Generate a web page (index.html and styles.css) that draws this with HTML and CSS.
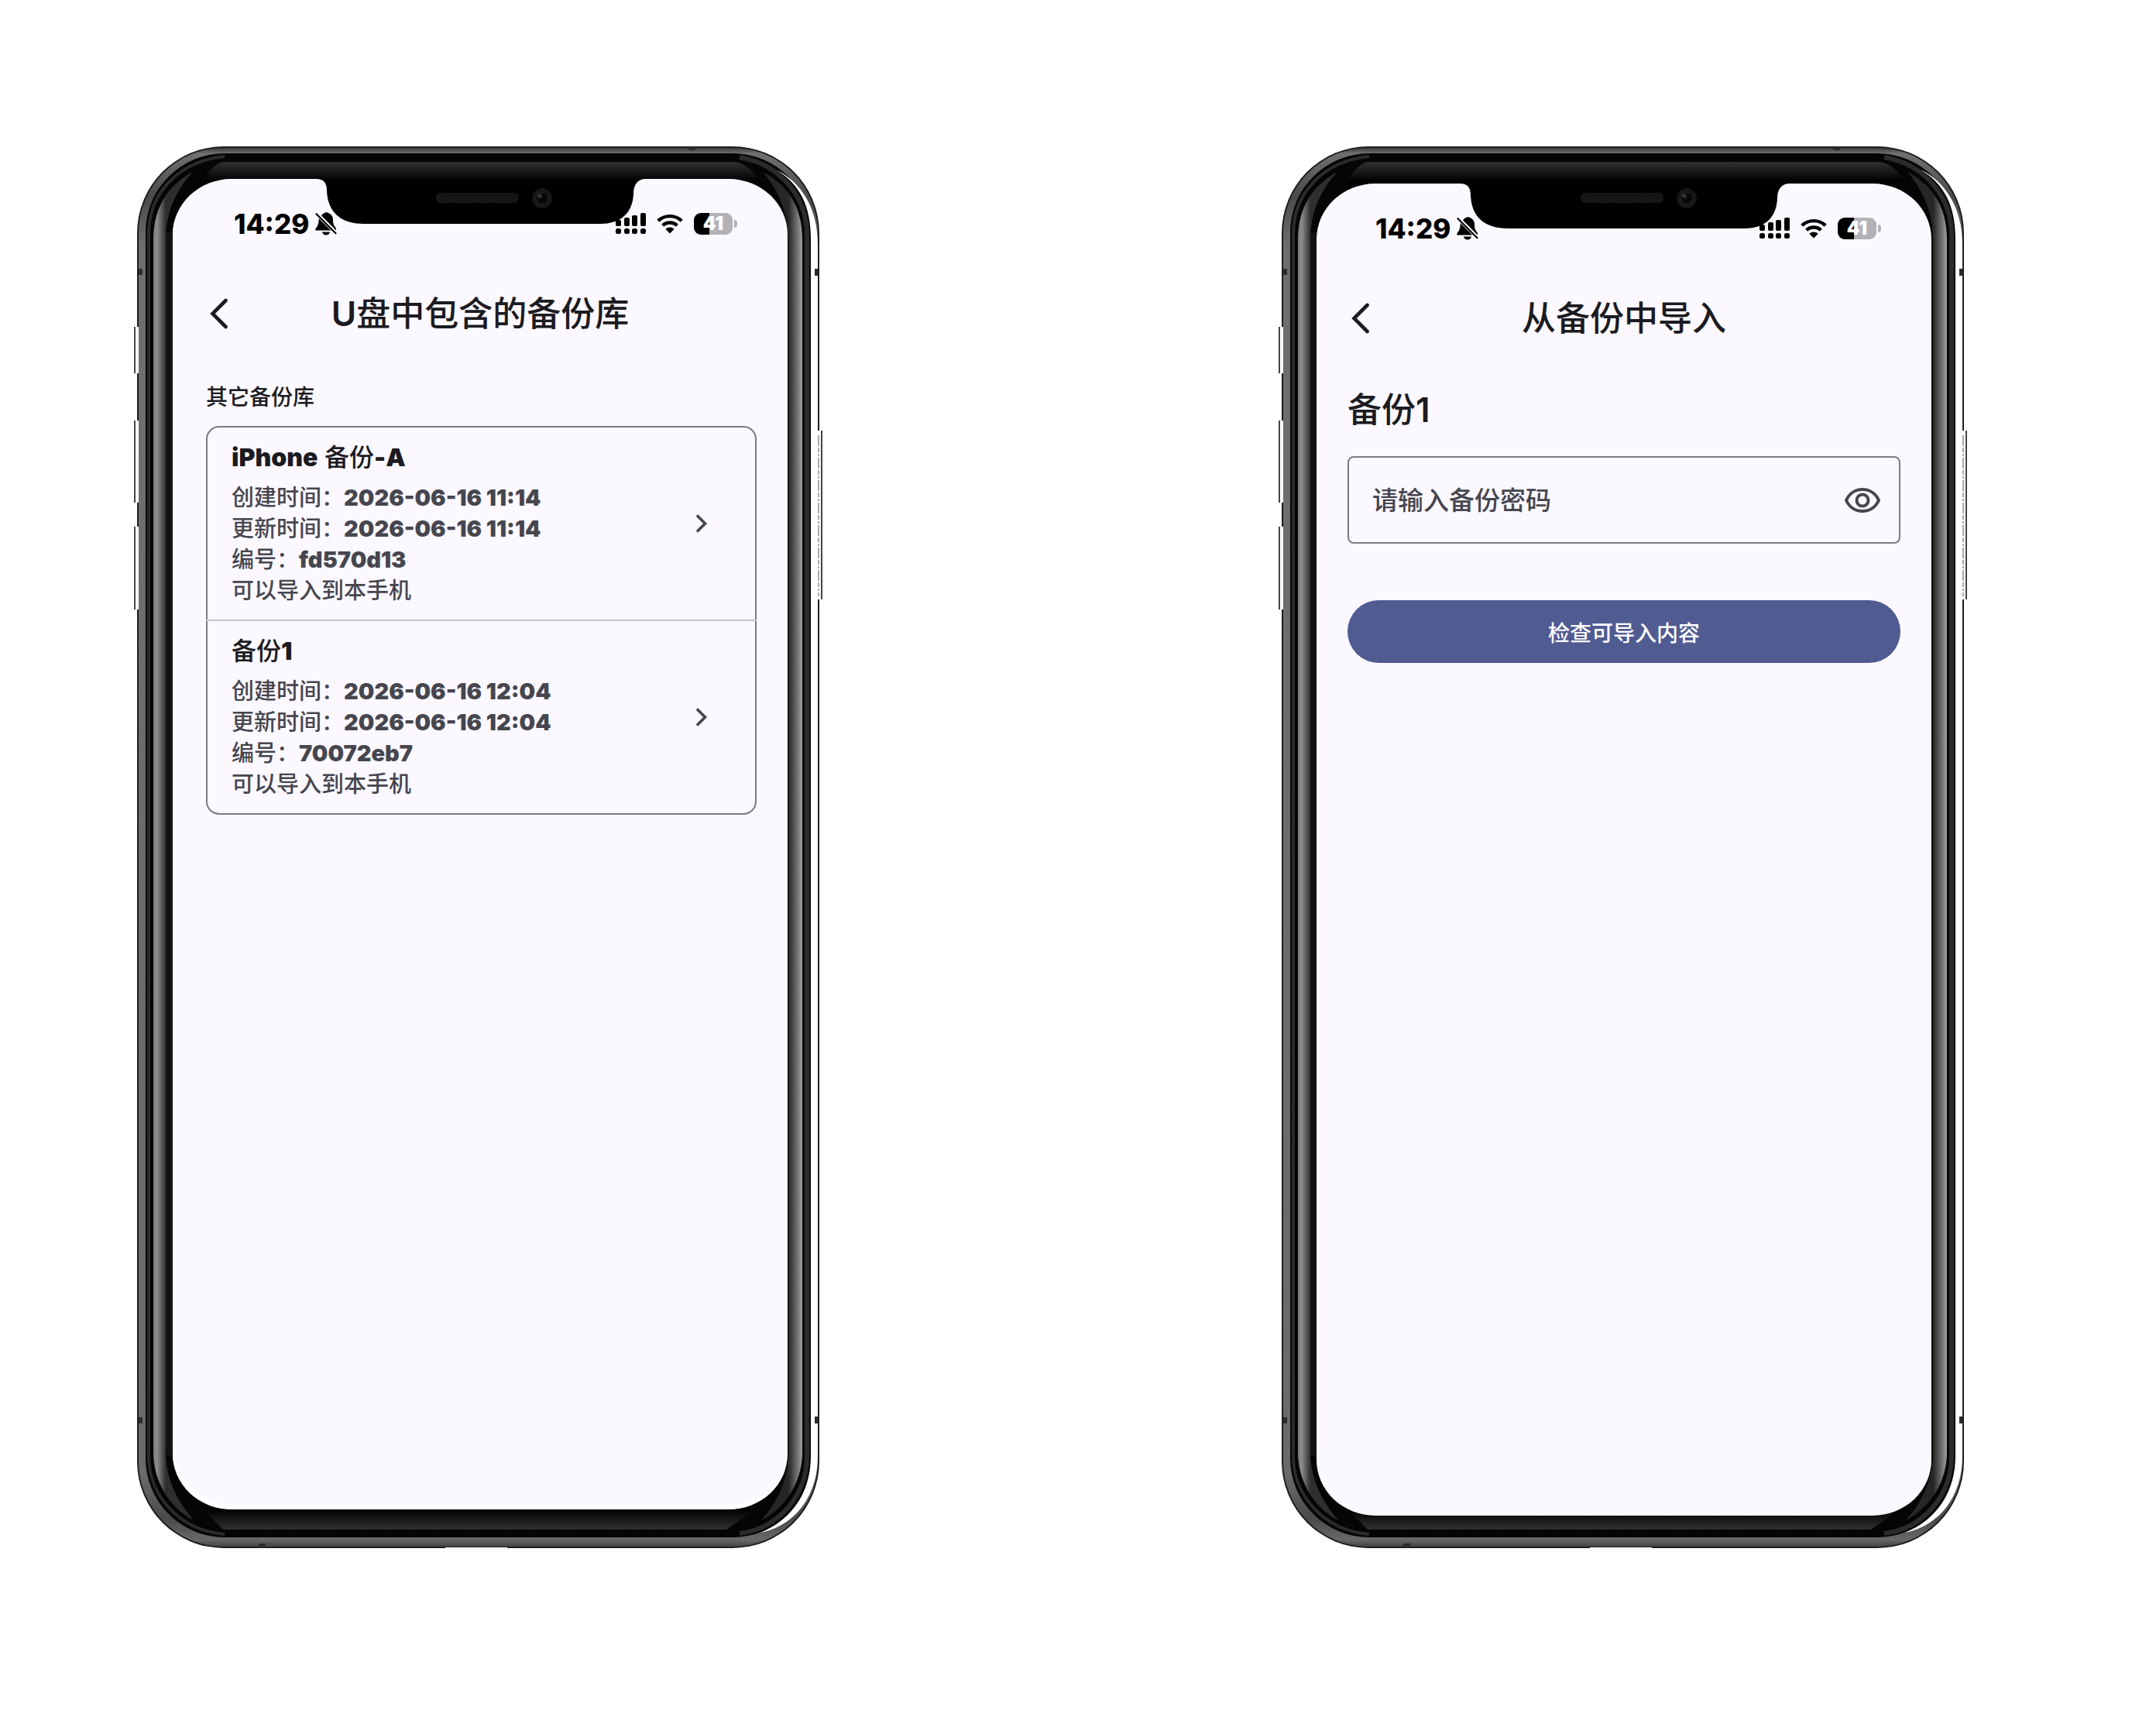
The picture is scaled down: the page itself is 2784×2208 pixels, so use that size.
FILE: index.html
```html
<!DOCTYPE html>
<html lang="zh-CN">
<head>
<meta charset="utf-8">
<meta name="viewport" content="width=device-width, initial-scale=1">
<title>从备份中导入</title>
<link rel="stylesheet" href="styles.css">
</head>
<body>
<!-- Shared artwork -->
<svg class="defs" width="0" height="0" aria-hidden="true">
  <defs>
    <linearGradient id="rim-v" x1="0" y1="0" x2="0" y2="1">
      <stop offset="0" stop-color="#3c3c3c"/><stop offset="0.004" stop-color="#707070"/><stop offset="0.035" stop-color="#4a4a4a"/><stop offset="0.07" stop-color="#6e6e6e"/>
      <stop offset="0.95" stop-color="#6a6a6a"/><stop offset="0.98" stop-color="#4a4a4a"/><stop offset="0.995" stop-color="#686868"/><stop offset="1" stop-color="#444"/>
    </linearGradient>
    <linearGradient id="band-l" x1="198" y1="0" x2="214" y2="0" gradientUnits="userSpaceOnUse">
      <stop offset="0" stop-color="#7c7c7c"/><stop offset="0.3" stop-color="#8c8c8c"/><stop offset="1" stop-color="#2e2e2e"/>
    </linearGradient>
    <linearGradient id="band-r" x1="1018" y1="0" x2="1036" y2="0" gradientUnits="userSpaceOnUse">
      <stop offset="0" stop-color="#262626"/><stop offset="0.3" stop-color="#484848"/><stop offset="1" stop-color="#a0a0a0"/>
    </linearGradient>
    <linearGradient id="glass-t" x1="0" y1="209" x2="0" y2="234" gradientUnits="userSpaceOnUse">
      <stop offset="0" stop-color="#303030"/><stop offset="1" stop-color="#000"/>
    </linearGradient>
    <linearGradient id="glass-b" x1="0" y1="1949" x2="0" y2="1975" gradientUnits="userSpaceOnUse">
      <stop offset="0" stop-color="#000"/><stop offset="1" stop-color="#303030"/>
    </linearGradient>
    <pattern id="mesh" width="4" height="4" patternUnits="userSpaceOnUse">
      <rect width="4" height="4" fill="#101010"/><path d="M0 0h2v2H0zM2 2h2v2H2z" fill="#1c1c1c"/>
    </pattern>
    <symbol id="frame" viewBox="172 189 892 1811">
      <rect x="177" y="189" width="881" height="1810" rx="112" fill="#1e1e1e"/>
      <rect x="179" y="191" width="877" height="1806" rx="110" fill="url(#rim-v)"/>
      <rect x="188" y="198" width="860" height="1787" rx="102" fill="#050505"/>
      <path d="M192 1880V302C192 250 230 208 290 202M290 1981C230 1976 192 1930 192 1880" fill="none" stroke="#2b2b2b" stroke-width="4"/>
      <path d="M1042 1880V302C1042 255 1008 212 955 203M955 1980C1006 1974 1042 1930 1042 1880" fill="none" stroke="#2b2b2b" stroke-width="6"/>
      <path d="M288 209H948C962 210 975 222 982 236H262C266 224 276 212 288 209Z" fill="url(#glass-t)"/>
      <path d="M262 1949H975L938 1975H288Z" fill="url(#glass-b)"/>
      <path d="M214 300V1880H223V300Z" fill="#121212"/>
      <path d="M198 310C198 270 215 240 249 222C226 246 214 276 214 310V1875C214 1910 230 1940 250 1963C216 1945 198 1910 198 1875Z" fill="url(#band-l)"/>
      <path d="M1036 310C1036 270 1020 240 985 222C1006 246 1018 276 1018 310V1875C1018 1910 1004 1940 983 1963C1018 1945 1036 1910 1036 1875Z" fill="url(#band-r)"/>
      <path d="M1002 219C1037 236 1056 272 1056 316V1880C1056 1930 1028 1970 982 1979C1024 1962 1047 1925 1047 1880V310C1047 270 1036 240 1002 219Z" fill="#fff"/>
      <path d="M1055 556H1059V774H1055Z" fill="#fff"/>
      <path d="M1057 562V770" stroke="#555" stroke-width="1" stroke-dasharray="14 2 6 2 3 2"/>
      <path d="M1061 556V774" stroke="#444" stroke-width="2"/>
      <path d="M173 422H179V482H173ZM173 543H179V649H173ZM173 680H179V787H173Z" fill="#fff"/>
      <path d="M174 422V482M174 543V649M174 680V787" stroke="#444" stroke-width="2"/>
      <path d="M575 1998h80v2h-80z" fill="#fff"/>
      <path d="M179 347h5v8h-5zM179 1830h5v8h-5zM1052 347h4v9h-4zM1052 1829h4v9h-4zM889 190h9v4h-9zM334 1993h9v5h-9z" fill="#2c2c2c"/>
    </symbol>
    <symbol id="notch" viewBox="408 231 428 59">
      <path d="M408 231C418 231 422 236 422 246C423 274 440 289 470 289H775C803 289 817 274 818 250C818 238 824 231 834 231Z" fill="#000"/>
    </symbol>
    <symbol id="sensors" viewBox="560 240 160 32">
      <rect x="563" y="249" width="107" height="13" rx="6" fill="url(#mesh)"/>
      <circle cx="700" cy="256" r="13" fill="#161616"/><circle cx="700" cy="256" r="8" fill="#080808"/>
      <circle cx="700" cy="256" r="8" fill="none" stroke="#2a2a2a"/><circle cx="697" cy="253" r="3" fill="#303030"/>
    </symbol>
    <symbol id="bell-off" viewBox="0 0 28 30">
      <path d="M8 4.500C9 2.500 11 1.500 12 1C13 0 16 0 17 1C21 2.500 23 6 23 10C23 15 24 17 27 21V23.500Z"/>
      <path d="M4.800 8L20.500 23.500H1C0 23.500 0 21.500 1 20.500C4 17 4.500 14 4.800 8Z"/>
      <path d="M9 25.500H19C18.500 28 16.500 29.500 14 29.500S9.500 28 9 25.500Z"/>
      <path d="M1.800 1.800L27 27" fill="none" stroke="#fbf8ff" stroke-width="4"/>
      <path d="M1.500 2.200L26.500 27.200" fill="none" stroke="currentColor" stroke-width="2.200" stroke-linecap="round"/>
    </symbol>
    <symbol id="signal" viewBox="0 0 39 28">
      <rect x="0" y="9" width="7" height="8" rx="2"/><rect x="11" y="6" width="7" height="11" rx="2"/><rect x="21" y="3" width="7" height="14" rx="2"/><rect x="32" y="0" width="7" height="17" rx="2"/>
      <rect x="0" y="20" width="7" height="7" rx="2.500"/><rect x="11" y="20" width="7" height="7" rx="2.500"/><rect x="21" y="20" width="7" height="7" rx="2.500"/><rect x="32" y="20" width="7" height="7" rx="2.500"/>
    </symbol>
    <symbol id="wifi" viewBox="0 0 34 26">
      <path d="M1.800 9.200A22 22 0 0 1 32.200 9.200M7.600 15.200A13.600 13.600 0 0 1 26.400 15.200" fill="none" stroke="currentColor" stroke-width="4.400"/>
      <path d="M17 25.500L11.300 19.800A8.200 8.200 0 0 1 22.700 19.800Z"/>
    </symbol>
    <symbol id="back" viewBox="0 0 24 40">
      <path d="M20.500 3L3.500 20L20.500 37" fill="none" stroke="currentColor" stroke-width="4.600" stroke-linecap="round" stroke-linejoin="miter"/>
    </symbol>
    <symbol id="next" viewBox="0 0 16 24">
      <path d="M3 2.500L12.500 12L3 21.500" fill="none" stroke="currentColor" stroke-width="3.600" stroke-linecap="round"/>
    </symbol>
    <symbol id="eye" viewBox="0 0 46 32">
      <path d="M2 16C6 7 14 2 23 2S40 7 44 16C40 25 32 30 23 30S6 25 2 16Z" fill="none" stroke="currentColor" stroke-width="4" stroke-linejoin="round"/>
      <circle cx="23" cy="16" r="7.500" fill="none" stroke="currentColor" stroke-width="4"/>
    </symbol>
  </defs>
</svg>

<main class="stage">
  <section class="phone phone--list" aria-label="U盘中包含的备份库">
    <svg class="phone__frame" aria-hidden="true"><use href="#frame"/></svg>
    <div class="screen">
      <div class="status">
        <span class="status__time">14:29</span>
        <svg class="status__bell" aria-hidden="true"><use href="#bell-off"/></svg>
        <svg class="status__signal" aria-hidden="true"><use href="#signal"/></svg>
        <svg class="status__wifi" aria-hidden="true"><use href="#wifi"/></svg>
        <span class="battery"><span class="battery__level">41</span></span>
      </div>
      <svg class="screen__notch" aria-hidden="true"><use href="#notch"/></svg>
      <header class="bar">
        <button class="bar__back" type="button" aria-label="返回"><svg class="bar__icon" aria-hidden="true"><use href="#back"/></svg></button>
        <h1 class="bar__title"><span class="latin">U</span>盘中包含的备份库</h1>
      </header>
      <div class="content">
        <h2 class="label">其它备份库</h2>
        <ul class="card">
          <li class="card__row">
            <a class="item" href="#a">
              <span class="item__text">
                <strong class="item__name"><b>iPhone</b> 备份<b>-A</b></strong>
                <span>创建时间：<b>2026-06-16 11:14</b></span>
                <span>更新时间：<b>2026-06-16 11:14</b></span>
                <span>编号：<b>fd570d13</b></span>
                <span>可以导入到本手机</span>
              </span>
              <svg class="item__next" aria-hidden="true"><use href="#next"/></svg>
            </a>
          </li>
          <li class="card__row">
            <a class="item" href="#b">
              <span class="item__text">
                <strong class="item__name">备份<b>1</b></strong>
                <span>创建时间：<b>2026-06-16 12:04</b></span>
                <span>更新时间：<b>2026-06-16 12:04</b></span>
                <span>编号：<b>70072eb7</b></span>
                <span>可以导入到本手机</span>
              </span>
              <svg class="item__next" aria-hidden="true"><use href="#next"/></svg>
            </a>
          </li>
        </ul>
      </div>
    </div>
    <svg class="phone__sensors" aria-hidden="true"><use href="#sensors"/></svg>
  </section>

  <section class="phone phone--import" aria-label="从备份中导入">
    <svg class="phone__frame" aria-hidden="true"><use href="#frame"/></svg>
    <div class="screen">
      <div class="status">
        <span class="status__time">14:29</span>
        <svg class="status__bell" aria-hidden="true"><use href="#bell-off"/></svg>
        <svg class="status__signal" aria-hidden="true"><use href="#signal"/></svg>
        <svg class="status__wifi" aria-hidden="true"><use href="#wifi"/></svg>
        <span class="battery"><span class="battery__level">41</span></span>
      </div>
      <svg class="screen__notch" aria-hidden="true"><use href="#notch"/></svg>
      <header class="bar">
        <button class="bar__back" type="button" aria-label="返回"><svg class="bar__icon" aria-hidden="true"><use href="#back"/></svg></button>
        <h1 class="bar__title">从备份中导入</h1>
      </header>
      <form class="content">
        <h2 class="heading"><label for="password">备份<span class="latin">1</span></label></h2>
        <div class="field">
          <input class="field__input" id="password" type="password" placeholder="请输入备份密码">
          <button class="field__toggle" type="button" aria-label="显示密码"><svg class="field__icon" aria-hidden="true"><use href="#eye"/></svg></button>
        </div>
        <button class="submit" type="button">检查可导入内容</button>
      </form>
    </div>
    <svg class="phone__sensors" aria-hidden="true"><use href="#sensors"/></svg>
  </section>
</main>
</body>
</html>
```
FILE: styles.css
```css
* { box-sizing: border-box; }

body {
  margin: 0;
  background: #fff;
  color: #1b1b21;
  font-family: Inter, "Noto Sans CJK SC", sans-serif;
}

h1, h2, ul { margin: 0; padding: 0; }

button {
  margin: 0;
  padding: 0;
  border: 0;
  background: none;
  color: inherit;
  font: inherit;
  cursor: pointer;
}

svg { display: block; fill: currentColor; }

.defs { position: absolute; }

.latin { font-weight: 600; }

.stage {
  display: flex;
  justify-content: space-between;
  align-items: flex-start;
  gap: 48px;
  padding: 189px 242px 189px 172px;
}

/* Device */
.phone {
  position: relative;
  display: flex;
  flex: 0 1 892px;
  aspect-ratio: 892 / 1811;
}

.phone--list { --inset: 43px; padding: 42px 47px 51px 51px; }
.phone--import { --inset: 40px; padding: 48px 48px 43px 50px; }

.phone__frame {
  position: absolute;
  inset: 0;
  width: 100%;
  height: 100%;
}

.phone__sensors {
  position: absolute;
  top: 51px;
  left: 388px;
  width: 160px;
  height: 32px;
}

.screen {
  position: relative;
  flex: 1;
  border-radius: 76px / 72px;
  background: #fbf8ff;
}

.phone--list .screen { box-shadow: inset 2px -6px 0 #fff; }

.screen__notch {
  position: absolute;
  top: 0;
  left: 185px;
  width: 428px;
  height: 59px;
}

/* Status bar */
.status {
  display: flex;
  align-items: center;
  height: 116px;
  padding: 0 65px 0 calc(var(--inset) + 36px);
  color: #000;
}

.status__time { font-size: 35px; font-weight: 800; }
.status__bell { width: 28px; height: 30px; margin-left: 8px; }
.status__signal { width: 39px; height: 28px; margin-left: auto; }
.status__wifi { width: 34px; height: 26px; margin: 0 14px; }

.battery {
  display: flex;
  align-items: center;
  gap: 2px;
}

.battery::after {
  content: "";
  width: 4px;
  height: 10px;
  border-radius: 0 5px 5px 0;
  background: #b3b1b6;
}

.battery__level {
  width: 50px;
  border-radius: 9px;
  background: linear-gradient(90deg, #000 41%, #b3b1b6 41%);
  color: #fff;
  font-size: 24px;
  font-weight: 900;
  line-height: 28px;
  text-align: center;
}

/* Title bar */
.bar {
  display: grid;
  grid-template-columns: 1fr auto 1fr;
  align-items: center;
  height: 116px;
  padding: 0 var(--inset);
}

.bar__back { justify-self: start; padding: 0 5px; }
.bar__icon { width: 24px; height: 40px; }
.bar__title { font-size: 44px; font-weight: 500; line-height: 60px; }

.content { padding: 30px 40px 30px var(--inset); }

/* Backup list */
.label {
  margin-bottom: 17px;
  font-size: 28px;
  font-weight: 500;
  line-height: 40px;
}

.card {
  border: 2px solid #7b7983;
  border-radius: 17px;
  list-style: none;
}

.card__row + .card__row {
  margin: 0 -2px;
  padding: 0 2px;
  border-top: 2px solid #c8c6cf;
}

.item {
  display: flex;
  align-items: center;
  padding: 17px 61px 17px 31px;
  color: #46464f;
  font-size: 29px;
  font-weight: 500;
  line-height: 40px;
  text-decoration: none;
}

.item b { font-weight: 900; }
.item__text { display: flex; flex: 1; flex-direction: column; }

.item__name {
  margin-bottom: 10px;
  color: #1b1b21;
  font-size: 32px;
  font-weight: 500;
  line-height: 44px;
}

.item__next { width: 16px; height: 24px; }

/* Import form */
.heading {
  margin-bottom: 30px;
  font-size: 44px;
  font-weight: 500;
  line-height: 60px;
}

.field {
  display: flex;
  align-items: center;
  height: 113px;
  margin-bottom: 73px;
  padding: 0 24px 0 30px;
  border: 2px solid #7b7a86;
  border-radius: 8px;
}

.field__input {
  flex: 1;
  min-width: 0;
  padding: 0;
  border: 0;
  outline: 0;
  background: none;
  color: #1b1b21;
  font: 500 33px/48px Inter, "Noto Sans CJK SC", sans-serif;
}

.field__input::placeholder { color: #46464f; opacity: 1; }
.field__icon { width: 46px; height: 32px; color: #46464f; }

.submit {
  width: 100%;
  height: 81px;
  border-radius: 41px;
  background: #505b92;
  color: #fff;
  font-size: 28px;
  font-weight: 500;
}
```
